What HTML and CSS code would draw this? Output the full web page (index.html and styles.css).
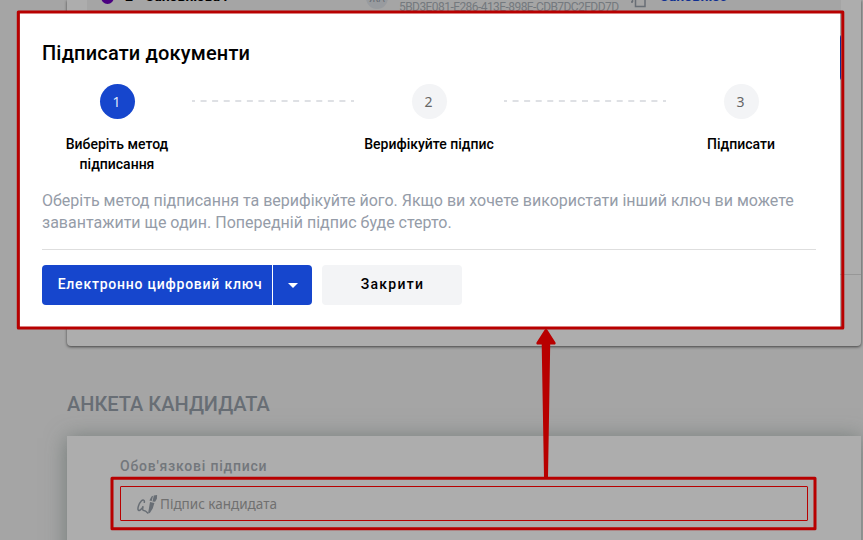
FILE: index.html
```html
<!DOCTYPE html>
<html lang="uk">
<head>
<meta charset="utf-8">
<title>Підписати документи</title>
<link rel="stylesheet" href="styles.css">
</head>
<body>
<main class="page">
  <section class="card summary">
    <div class="summary-row">
      <span class="status-dot"></span>
      <span class="row-title">2 - Заповнюва і</span>
      <span class="avatar">ЖА</span>
      <span class="row-id">5BD3E081-E286-413E-898E-CDB7DC2FDD7D</span>
      <svg class="copy" viewBox="0 0 16 18"><path d="M4.500 4.500h9.500v12H4.500zM0 12h2M1.500 12V1" fill="none" stroke="#686e75" stroke-width="1.500"/></svg>
      <span class="row-link">Заповнює</span>
    </div>
    <div class="summary-actions"><button class="side-button"></button></div>
    <div class="summary-foot"></div>
  </section>
  <h2 class="section-title">АНКЕТА КАНДИДАТА</h2>
  <section class="card form">
    <h3 class="form-title">Обов'язкові підписи</h3>
    <div class="field">
      <svg class="sign" viewBox="0 0 22 20">
        <path d="M7.300 8.300C7.800 6 6 5.300 4.300 7 2 9.500.3 14 1.200 16c.8 1.700 4-1.300 5-3.800-.8 2.300-.8 4.300.6 4.400 1.400 0 1.900.2 3.900 2.300" fill="none" stroke="#686e75" stroke-width="1.500" stroke-linecap="round"/>
        <path d="M14.500 2.500l1.600-.7-1.400 5.200-2.300-.5zM16.800 1.500l3.300-.4-.2 3.700-1.800 3-2.600-.4zM13 8l4.400 1-1.700 5.500-2.700 4.200-1.300.8-.5-.9.800-4.600z" fill="#686e75"/>
      </svg>
      <span>Підпис кандидата</span>
    </div>
  </section>
</main>

<div class="modal">
  <h1 class="modal-title">Підписати документи</h1>
  <div class="steps">
    <div class="step"><span class="num active">1</span><span class="step-label">Виберіть метод підписання</span></div>
    <svg class="dash" viewBox="0 0 162 2"><path d="M0 1h162"/></svg>
    <div class="step"><span class="num">2</span><span class="step-label">Верифікуйте підпис</span></div>
    <svg class="dash" viewBox="0 0 162 2"><path d="M0 1h162"/></svg>
    <div class="step"><span class="num">3</span><span class="step-label">Підписати</span></div>
  </div>
  <p class="hint">Оберіть метод підписання та верифікуйте його. Якщо ви хочете використати інший ключ ви можете завантажити ще один. Попередній підпис буде стерто.</p>
  <div class="actions">
    <button class="btn primary">Електронно цифровий ключ</button>
    <button class="btn caret"><svg viewBox="0 0 10 5"><path d="M0 0h10L5 5z" fill="#fff"/></svg></button>
    <button class="btn close">Закрити</button>
  </div>
</div>

<svg class="marks" viewBox="0 0 863 540">
  <g fill="none" stroke="#b80000" stroke-width="3" stroke-linejoin="round">
    <rect x="18.300" y="12" width="824.500" height="316"/>
    <rect x="112" y="478.200" width="703" height="50.600"/>
  </g>
  <path d="M544 477L541.700 344.500H537Q536 344 536.500 342.500L544.500 330Q546 328 547.500 330L555.500 342.500Q556 344 555 344.500H550.200L548 477z" fill="#b80000"/>
</svg>
</body>
</html>
```
FILE: styles.css
```css
* { box-sizing: border-box; }
html, body { margin: 0; height: 540px; overflow: hidden; }
body { position: relative; background: #a5a5a5; font-family: Roboto, sans-serif; color: #000; }
h1, h2, h3, p { margin: 0; }
button { border: 0; padding: 0; font-family: inherit; }

.page { display: flex; flex-direction: column; height: 540px; overflow: hidden; padding: 0 2px 0 67px; }
.card { background: #adadad; }
.summary {
  display: flex; flex-direction: column; flex: none; height: 346px;
  border-radius: 0 0 4px 4px; box-shadow: 0 1px 3px rgba(0, 0, 0, .6);
}
.summary-row {
  display: flex; align-items: flex-start; height: 34px; margin: 0 20px;
  padding-left: 14px; background: #a5a5a5; font-size: 14px; font-weight: 700;
}
.status-dot { flex: none; width: 13px; height: 14px; margin-top: -10px; border-radius: 50%; background: #4a0080; }
.row-title { flex: none; width: 238px; margin: -12px 0 0 11px; line-height: 16px; letter-spacing: 0; }
.avatar {
  flex: none; width: 22px; height: 22px; margin: -13px 0 0 3px; border-radius: 50%; background: #989b9f;
  color: #686e75; font: 10px/23px Roboto, sans-serif; text-align: center;
}
.row-id { flex: none; margin-left: 11px; width: 220px; font-size: 12px; font-weight: 400; line-height: 14px; color: #74797e; white-space: nowrap; letter-spacing: -.560px; }
.copy { width: 16px; height: 18px; margin: -10px 0 0 12px; flex: none; }
.row-link { margin: -12px 0 0 13px; color: #102f91; line-height: 16px; letter-spacing: .1px; }
.summary-actions { height: 241px; padding: 0 20px; display: flex; justify-content: flex-end; border-bottom: 1px solid #979797; }
.side-button { width: 48px; height: 47px; background: #102f91; border-radius: 4px; }
.summary-foot { flex: 1; }
.section-title { margin: 45px 0 19px; line-height: 26px; font-size: 20px; font-weight: 500; color: #686e75; }
.form { flex: none; height: 180px; padding: 21px 53px 0; box-shadow: 0 2px 20px rgba(70, 85, 80, .55); }
.form-title { line-height: 18px; font-size: 14px; font-weight: 500; letter-spacing: .780px; color: #73777c; }
.field {
  display: flex; align-items: center; height: 35px; margin-top: 11px; padding-left: 16px;
  border: 1px solid #b80000; border-radius: 1px; font: 13.500px "Noto Sans", sans-serif; color: #707070;
}
.sign { width: 22px; height: 20px; margin-right: 1px; }

.modal { position: absolute; left: 20px; top: 13px; width: 820px; height: 314px; padding: 28px 24px 0 22px; background: #fff; }
.modal-title { font-size: 20px; line-height: 24px; font-weight: 500; letter-spacing: .170px; }
.steps { display: flex; align-items: flex-start; margin-top: 6px; height: 106px; }
.step { flex: none; width: 150px; display: flex; flex-direction: column; align-items: center; }
.num {
  width: 35px; height: 35px; border-radius: 50%; background: #f3f4f6; color: #666;
  font: 14px/36px "Noto Sans", sans-serif; text-align: center; margin-top: 13px; padding-right: 1px;
}
.num.active { background: #1646cd; color: #dfe6fa; }
.step-label { width: 140px; padding: 0 10px; margin-top: 15px; font-size: 14px; line-height: 20px; font-weight: 500; text-align: center; }
.step:nth-child(3) .step-label { padding: 0; }
.dash { flex: none; width: 162px; height: 2px; margin-top: 29px; }
.dash path { stroke: #dee0e4; stroke-width: 2; stroke-dasharray: 6 5.570; stroke-dashoffset: 3; }
.hint { margin-top: 13px; padding-bottom: 15px; font-size: 16px; line-height: 22px; color: #959ca8; border-bottom: 1px solid #dedede; }
.actions { display: flex; margin-top: 15px; }
.btn { height: 40px; padding-bottom: 2px; font-size: 14px; font-weight: 500; }
.primary { width: 230px; padding-left: 6px; background: #1646cd; color: #fff; border-radius: 4px 0 0 4px; white-space: nowrap; letter-spacing: .780px; }
.caret { width: 39px; margin-left: 1px; padding: 0; display: flex; align-items: center; justify-content: center; background: #1646cd; border-radius: 0 4px 4px 0; }
.caret svg { width: 10px; height: 5px; }
.close { width: 140px; margin-left: 10px; padding-left: 1px; background: #f3f4f6; border-radius: 4px; color: #000; letter-spacing: 1.250px; }

.marks { position: absolute; left: 0; top: 0; width: 863px; height: 540px; pointer-events: none; }
```
